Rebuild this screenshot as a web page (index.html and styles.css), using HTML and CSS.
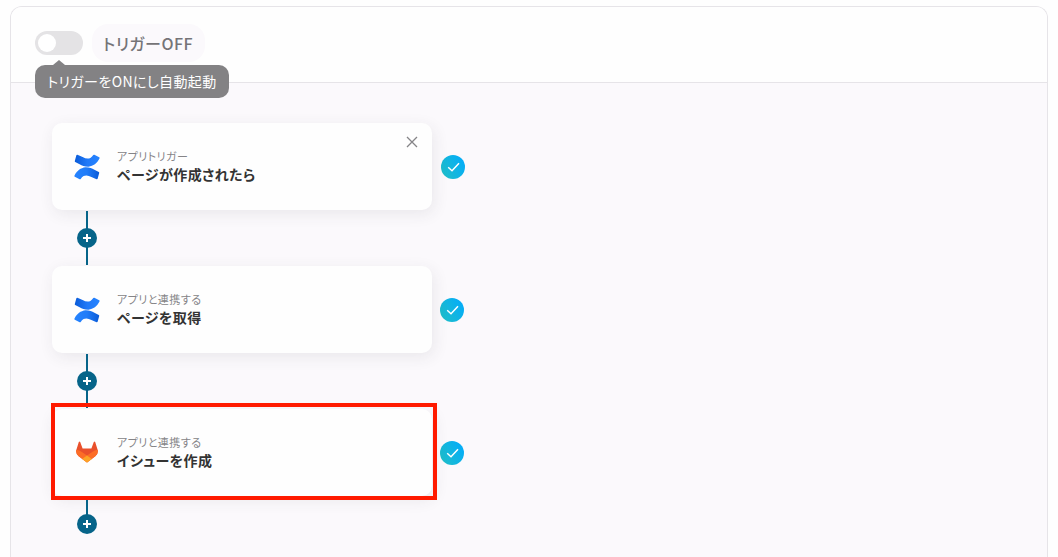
FILE: index.html
```
<!DOCTYPE html>
<html lang="ja">
<head>
    <meta charset="UTF-8">
    <meta name="viewport" content="width=device-width, initial-scale=1.0">
    <title>トリガー</title>
    <link rel="stylesheet" href="styles.css">
</head>
<body>
<svg class="symbols" aria-hidden="true">
    <defs>
        <linearGradient id="blue-top" x1="1" y1="0.4" x2="0" y2="0.4">
            <stop offset="0" stop-color="#2684ff"/>
            <stop offset="0.5" stop-color="#2079f8"/>
            <stop offset="1" stop-color="#0a5bd8"/>
        </linearGradient>
        <linearGradient id="blue-bottom" x1="0" y1="0.6" x2="1" y2="0.6">
            <stop offset="0" stop-color="#2684ff"/>
            <stop offset="0.5" stop-color="#207cf8"/>
            <stop offset="1" stop-color="#0a5bd8"/>
        </linearGradient>
    </defs>
    <symbol id="confluence" viewBox="0 0 26 26">
        <path fill="url(#blue-top)" d="M3.4 0.7 8.6 2.9Q12.8 5.4 16.4 3.9 18.2 2.9 19.3 1.1 19.7 0.5 20.4 0.8L25.2 3.2Q25.9 3.6 25.6 4.3C23 9.5 19.4 12 14.5 12.7 10.8 12.8 8 11.4 5.6 10.2L1.2 7.9Q0.6 7.5 0.8 6.9L2.3 1.4Q2.6 0.4 3.4 0.7Z"/>
        <path fill="url(#blue-bottom)" d="M22.6 25.3 17.4 23.1Q13.2 20.6 9.6 22.1 7.8 23.1 6.7 24.9 6.3 25.5 5.6 25.2L0.8 22.8Q0.1 22.4 0.4 21.7C3 16.5 6.6 14 11.5 13.3 15.2 13.2 18 14.6 20.4 15.8L24.8 18.1Q25.4 18.5 25.2 19.1L23.7 24.6Q23.4 25.6 22.6 25.3Z"/>
    </symbol>
    <symbol id="gitlab" viewBox="0 0 22 22">
        <path fill="#e9502b" d="M21.6 8.8 19.2 1Q18.5 0 17.8 1L15.4 7.4H6.6L4.2 1Q3.5 0 2.8 1L0.4 8.8Q-0.6 12.5 2.7 15.3L11 21.5 19.3 15.3Q22.6 12.5 21.6 8.8Z"/>
        <path fill="#fc6d26" d="M21.6 8.8Q18.7 9.3 16.2 10.9L11 14.6 5.8 10.9Q3.3 9.3 0.4 8.8Q-0.6 12.5 2.7 15.3L11 21.5 19.3 15.3Q22.6 12.5 21.6 8.8Z"/>
        <path fill="#fca326" d="M6.2 18 11 14.6 15.8 18 11 21.5Z"/>
    </symbol>
    <symbol id="check" viewBox="0 0 24 24">
        <path d="M7.2 12.3 11 15.7 18 8.3" fill="none" stroke="#fff" stroke-width="1.5"/>
    </symbol>
    <symbol id="plus" viewBox="0 0 20 20">
        <path d="M10 6v8M6 10h8" fill="none" stroke="#fff" stroke-width="2"/>
    </symbol>
</svg>
<main class="panel">
    <header class="panel-header">
        <div class="toggle">
            <span class="toggle-knob"></span>
            <div class="tooltip">トリガーをONにし自動起動</div>
        </div>
        <span class="status">トリガーOFF</span>
    </header>
    <div class="flow">
        <div class="step step-trigger">
            <div class="card">
                <svg class="app-icon"><use href="#confluence"/></svg>
                <div class="card-text">
                    <p class="card-kind">アプリトリガー</p>
                    <p class="card-title">ページが作成されたら</p>
                </div>
                <svg class="close" viewBox="0 0 12 12"><path d="M1 1 11 11M11 1 1 11"/></svg>
            </div>
            <svg class="done"><use href="#check"/></svg>
        </div>
        <div class="connector"><svg class="add"><use href="#plus"/></svg></div>
        <div class="step">
            <div class="card">
                <svg class="app-icon"><use href="#confluence"/></svg>
                <div class="card-text">
                    <p class="card-kind">アプリと連携する</p>
                    <p class="card-title">ページを取得</p>
                </div>
            </div>
            <svg class="done"><use href="#check"/></svg>
        </div>
        <div class="connector"><svg class="add"><use href="#plus"/></svg></div>
        <div class="step">
            <div class="card">
                <svg class="app-icon app-icon-gitlab"><use href="#gitlab"/></svg>
                <div class="card-text">
                    <p class="card-kind">アプリと連携する</p>
                    <p class="card-title">イシューを作成</p>
                </div>
                <div class="highlight"></div>
            </div>
            <svg class="done"><use href="#check"/></svg>
        </div>
        <div class="connector connector-last"><svg class="add"><use href="#plus"/></svg></div>
    </div>
</main>
</body>
</html>
```
FILE: styles.css
```
* {
    box-sizing: border-box;
}

body {
    margin: 0;
    height: 557px;
    overflow: hidden;
    background: #fefefe;
    font-family: "Noto Sans CJK JP", sans-serif;
    font-feature-settings: "palt";
    color: #333;
}

p {
    margin: 0;
}

svg {
    display: block;
}

.symbols {
    position: absolute;
    width: 0;
    height: 0;
}

.panel {
    margin: 6px 10px 0;
    height: 551px;
    border: 1px solid #e6e4e8;
    border-bottom: 0;
    border-radius: 12px 12px 0 0;
    background: #fbf9fc;
    overflow: hidden;
}

.panel-header {
    display: flex;
    gap: 9px;
    height: 76px;
    padding: 17px 24px 0;
    border-bottom: 1px solid #e6e4e8;
    background: #fefefe;
}

.toggle {
    position: relative;
    width: 48px;
    height: 24px;
    margin-top: 7px;
    padding: 3px;
    border-radius: 12px;
    background: #e4e3e5;
}

.toggle-knob {
    display: block;
    width: 18px;
    height: 18px;
    border-radius: 50%;
    background: #fff;
}

.tooltip {
    position: absolute;
    top: 34px;
    left: 0;
    width: 194px;
    height: 33px;
    border-radius: 10px;
    background: #838284;
    color: #fff;
    font-size: 14px;
    letter-spacing: 0.4px;
    line-height: 33px;
    text-align: center;
    white-space: nowrap;
}

.tooltip::before {
    content: "";
    position: absolute;
    top: -5px;
    left: 18px;
    border: 6px solid transparent;
    border-top: 0;
    border-bottom: 5px solid #838284;
}

.status {
    height: 38px;
    padding: 0 12px 0 11px;
    border-radius: 16px;
    background: #fbf9fc;
    color: #757477;
    font-size: 16px;
    font-weight: 500;
    letter-spacing: 0.5px;
    line-height: 38px;
}

.flow {
    padding: 40px 0 0 41px;
}

.step {
    display: flex;
    align-items: center;
    gap: 8px;
}

.step-trigger {
    gap: 9px;
}

.card {
    position: relative;
    display: flex;
    align-items: center;
    gap: 17px;
    width: 380px;
    height: 87px;
    padding: 0 22px;
    border-radius: 10px;
    background: #fefefe;
    box-shadow: 2px 4px 16px rgba(60, 50, 70, 0.09);
}

.app-icon {
    width: 26px;
    height: 26px;
}

.app-icon-gitlab {
    width: 22px;
    height: 22px;
    margin: 0 2px 2px;
}

.card-text {
    padding-bottom: 3px;
}

.card-kind {
    color: #858487;
    font-size: 11px;
    letter-spacing: 0.45px;
    line-height: 18px;
}

.card-title {
    font-size: 14px;
    font-weight: 700;
    letter-spacing: 0.4px;
    line-height: 18px;
}

.close {
    position: absolute;
    top: 13px;
    right: 14px;
    width: 12px;
    height: 12px;
    fill: none;
    stroke: #858487;
    stroke-width: 1.3;
}

.done {
    width: 24px;
    height: 24px;
    border-radius: 50%;
    background: linear-gradient(60deg, #22c0c4, #00aaff);
}

.connector {
    display: flex;
    align-items: center;
    position: relative;
    height: 56px;
    margin-left: 25px;
    background: linear-gradient(#066489, #066489) 9px 1px / 2px 54px no-repeat;
}

.connector-last {
    background-size: 2px 27px;
}

.add {
    width: 20px;
    height: 20px;
    border-radius: 50%;
    background: #066489;
}

.highlight {
    position: absolute;
    top: -6px;
    left: -1px;
    z-index: 1;
    width: 386px;
    height: 97px;
    border: 4px solid #ff1a00;
}
```
